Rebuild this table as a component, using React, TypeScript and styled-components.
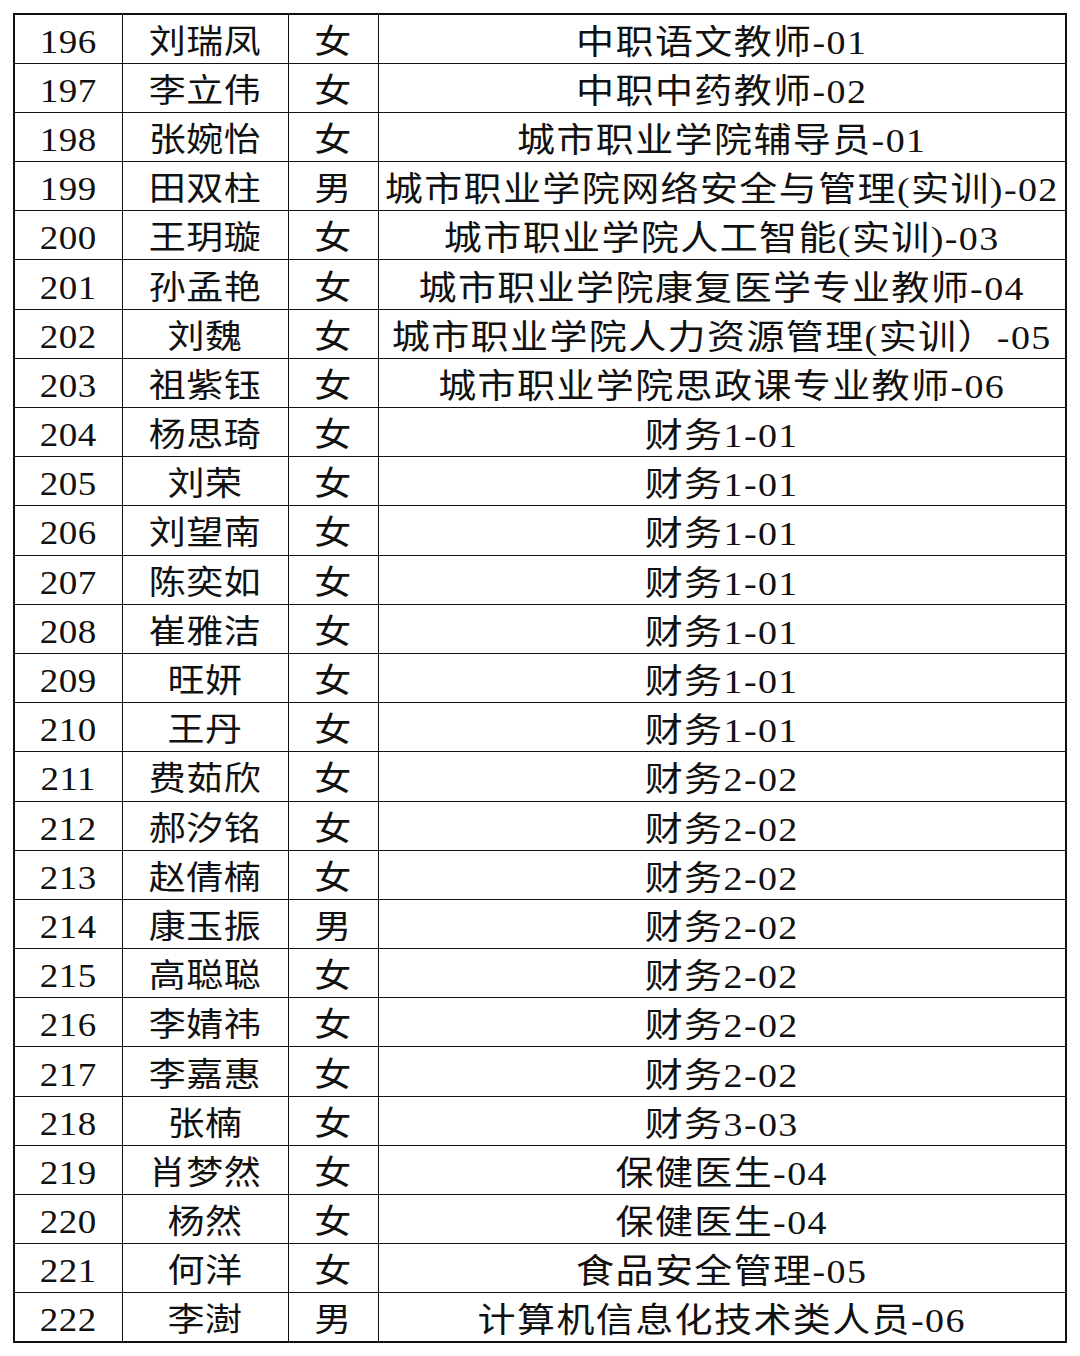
import React from 'react';
import styled, { createGlobalStyle } from 'styled-components';

const GlobalStyle = createGlobalStyle`
  html, body {
    margin: 0;
    padding: 0;
    background: #ffffff;
  }
`;

const Page = styled.div`
  width: 1080px;
  height: 1356px;
  padding: 13px 0 0 13px;
  box-sizing: border-box;
  background: #ffffff;
  overflow: hidden;
`;

const Table = styled.table`
  width: 1054px;
  table-layout: fixed;
  border-collapse: collapse;
  border: 2px solid #111;
  font-family: 'Liberation Serif', 'Noto Sans CJK SC', serif;
  color: #111;
`;

const Row = styled.tr`
  height: 49.2px;
`;

const Cell = styled.td<{ $wide?: boolean }>`
  padding: 6px 0 0 0;
  border: 1.8px solid #111;
  text-align: center;
  vertical-align: middle;
  white-space: nowrap;
  overflow: visible;
  font-size: ${(p) => (p.$wide ? '38px' : '37px')};
  letter-spacing: ${(p) => (p.$wide ? '1.4px' : '0.5px')};
  line-height: 30px;
  font-weight: 400;
`;

const Text = styled.span`
  display: inline-block;
  transform: scaleY(0.9);
  line-height: 30px;
`;

type Entry = [number, string, string, string];

const rows: Entry[] = [
  [196, '刘瑞凤', '女', '中职语文教师-01'],
  [197, '李立伟', '女', '中职中药教师-02'],
  [198, '张婉怡', '女', '城市职业学院辅导员-01'],
  [199, '田双柱', '男', '城市职业学院网络安全与管理(实训)-02'],
  [200, '王玥璇', '女', '城市职业学院人工智能(实训)-03'],
  [201, '孙孟艳', '女', '城市职业学院康复医学专业教师-04'],
  [202, '刘魏', '女', '城市职业学院人力资源管理(实训）-05'],
  [203, '祖紫钰', '女', '城市职业学院思政课专业教师-06'],
  [204, '杨思琦', '女', '财务1-01'],
  [205, '刘荣', '女', '财务1-01'],
  [206, '刘望南', '女', '财务1-01'],
  [207, '陈奕如', '女', '财务1-01'],
  [208, '崔雅洁', '女', '财务1-01'],
  [209, '旺妍', '女', '财务1-01'],
  [210, '王丹', '女', '财务1-01'],
  [211, '费茹欣', '女', '财务2-02'],
  [212, '郝汐铭', '女', '财务2-02'],
  [213, '赵倩楠', '女', '财务2-02'],
  [214, '康玉振', '男', '财务2-02'],
  [215, '高聪聪', '女', '财务2-02'],
  [216, '李婧祎', '女', '财务2-02'],
  [217, '李嘉惠', '女', '财务2-02'],
  [218, '张楠', '女', '财务3-03'],
  [219, '肖梦然', '女', '保健医生-04'],
  [220, '杨然', '女', '保健医生-04'],
  [221, '何洋', '女', '食品安全管理-05'],
  [222, '李澍', '男', '计算机信息化技术类人员-06'],
];

export default function App() {
  return (
    <Page>
      <GlobalStyle />
      <Table>
        <colgroup>
          <col style={{ width: 108 }} />
          <col style={{ width: 166 }} />
          <col style={{ width: 90 }} />
          <col />
        </colgroup>
        <tbody>
          {rows.map(([no, name, sex, post]) => (
            <Row key={no}>
              <Cell><Text>{no}</Text></Cell>
              <Cell><Text>{name}</Text></Cell>
              <Cell><Text>{sex}</Text></Cell>
              <Cell $wide><Text>{post}</Text></Cell>
            </Row>
          ))}
        </tbody>
      </Table>
    </Page>
  );
}
